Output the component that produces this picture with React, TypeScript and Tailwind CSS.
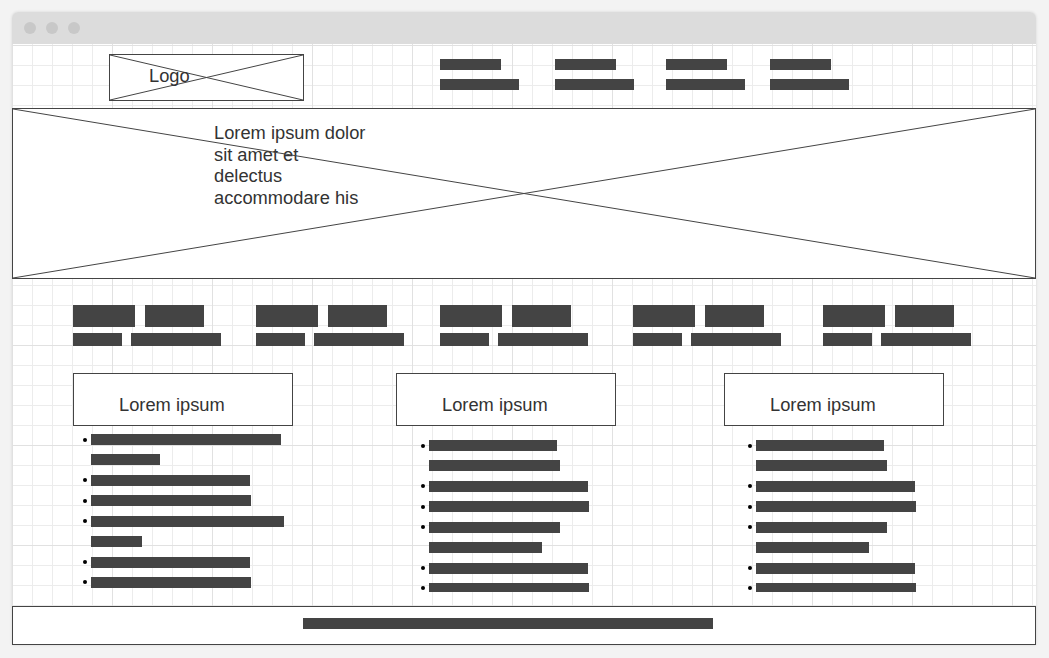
import React from "react";

const BAR = "bg-[#444444]";

function Cross() {
  return (
    <svg
      className="pointer-events-none absolute inset-0 h-full w-full"
      viewBox="0 0 100 100"
      preserveAspectRatio="none"
    >
      <line x1="0" y1="0" x2="100" y2="100" stroke="#444" strokeWidth="1" vectorEffect="non-scaling-stroke" />
      <line x1="0" y1="100" x2="100" y2="0" stroke="#444" strokeWidth="1" vectorEffect="non-scaling-stroke" />
    </svg>
  );
}

function NavGroup({ ml }: { ml: string }) {
  return (
    <div className={`${ml} mt-[15px] flex flex-col gap-[9px]`}>
      <div className={`h-[11px] w-[61px] ${BAR}`} />
      <div className={`h-[11px] w-[79px] ${BAR}`} />
    </div>
  );
}

function Feature({ ml }: { ml: string }) {
  return (
    <div className={`${ml} flex w-[148px] flex-col gap-[6px]`}>
      <div className="flex gap-[10px]">
        <div className={`h-[22px] w-[62px] ${BAR}`} />
        <div className={`h-[22px] w-[59px] ${BAR}`} />
      </div>
      <div className="flex gap-[9px]">
        <div className={`h-[13px] w-[49px] ${BAR}`} />
        <div className={`h-[13px] w-[90px] ${BAR}`} />
      </div>
    </div>
  );
}

type Item = { w: number[] };

function Card({
  ml,
  listPl,
  listMt,
  items,
}: {
  ml: string;
  listPl: string;
  listMt: string;
  items: Item[];
}) {
  return (
    <div className={`${ml} flex w-[220px] flex-col`}>
      <div className="h-[53px] border border-[#444] bg-white pl-[45px] pt-[20px] text-[18.3px] leading-[21.6px] text-[#333]">
        Lorem ipsum
      </div>
      <ul className={`${listPl} ${listMt} flex flex-col gap-[9.43px]`}>
        {items.map((it, i) => (
          <li key={i} className="flex">
            <div className="flex h-[11px] w-[8px] items-center">
              <div className="h-[4px] w-[4px] rounded-full bg-black" />
            </div>
            <div className="flex flex-col gap-[9.43px]">
              {it.w.map((w, j) => (
                <div key={j} className={`h-[11px] ${BAR}`} style={{ width: w }} />
              ))}
            </div>
          </li>
        ))}
      </ul>
    </div>
  );
}

const card1: Item[] = [
  { w: [190, 69] },
  { w: [159] },
  { w: [160] },
  { w: [193, 51] },
  { w: [159] },
  { w: [160] },
];

const card23: Item[] = [
  { w: [128, 131] },
  { w: [159] },
  { w: [160] },
  { w: [131, 113] },
  { w: [159] },
  { w: [160] },
];

export default function App() {
  return (
    <div
      className="min-h-screen bg-[#f3f3f3] pl-[12px] pt-[12px]"
      style={{ fontFamily: '"Liberation Sans", Arial, sans-serif' }}
    >
      <div className="w-[1024px] overflow-hidden rounded-t-[6px] shadow-[0_0_3px_rgba(0,0,0,0.12)]">
        {/* title bar */}
        <div className="flex h-[32px] items-center gap-[10px] bg-[#dcdcdc] pl-[12px]">
          <div className="h-[12px] w-[12px] rounded-full bg-[#c8c8c8]" />
          <div className="h-[12px] w-[12px] rounded-full bg-[#c8c8c8]" />
          <div className="h-[12px] w-[12px] rounded-full bg-[#c8c8c8]" />
        </div>

        {/* content with grid */}
        <div className="flex flex-col bg-white bg-[image:linear-gradient(to_right,#e1e1e1_1px,transparent_1px),linear-gradient(to_bottom,#e1e1e1_1px,transparent_1px),linear-gradient(to_right,#ececec_1px,transparent_1px),linear-gradient(to_bottom,#ececec_1px,transparent_1px)] bg-[size:100px_100px,100px_100px,20px_20px,20px_20px] bg-[position:0_1px]">
          {/* header */}
          <div className="flex h-[64px] items-start">
            <div className="relative ml-[97px] mt-[10px] h-[47px] w-[195px] border border-[#444] bg-white pl-[39px] pt-[10px] text-[18.3px] leading-[21.6px] text-[#333]">
              <Cross />
              <span className="relative">Logo</span>
            </div>
            <NavGroup ml="ml-[136px]" />
            <NavGroup ml="ml-[36px]" />
            <NavGroup ml="ml-[32px]" />
            <NavGroup ml="ml-[25px]" />
          </div>

          {/* hero */}
          <div className="relative h-[171px] border border-[#444] bg-white pl-[201px] pt-[13px] text-[18.3px] leading-[21.6px] text-[#333]">
            <p className="relative">
              Lorem ipsum dolor
              <br />
              sit amet et
              <br />
              delectus
              <br />
              accommodare his
            </p>
            <Cross />
          </div>

          {/* features */}
          <div className="mt-[26px] flex">
            <Feature ml="ml-[61px]" />
            <Feature ml="ml-[35px]" />
            <Feature ml="ml-[36px]" />
            <Feature ml="ml-[45px]" />
            <Feature ml="ml-[42px]" />
          </div>

          {/* cards */}
          <div className="mt-[27px] flex h-[219px] items-start overflow-hidden">
            <Card ml="ml-[61px]" listPl="pl-[10px]" listMt="mt-[8px]" items={card1} />
            <Card ml="ml-[103px]" listPl="pl-[25px]" listMt="mt-[14px]" items={card23} />
            <Card ml="ml-[108px]" listPl="pl-[24px]" listMt="mt-[14px]" items={card23} />
          </div>

          {/* footer */}
          <div className="mt-[14px] h-[39px] border border-[#444] bg-white pl-[290px] pt-[11px]">
            <div className={`h-[11px] w-[410px] ${BAR}`} />
          </div>
        </div>
      </div>
    </div>
  );
}
